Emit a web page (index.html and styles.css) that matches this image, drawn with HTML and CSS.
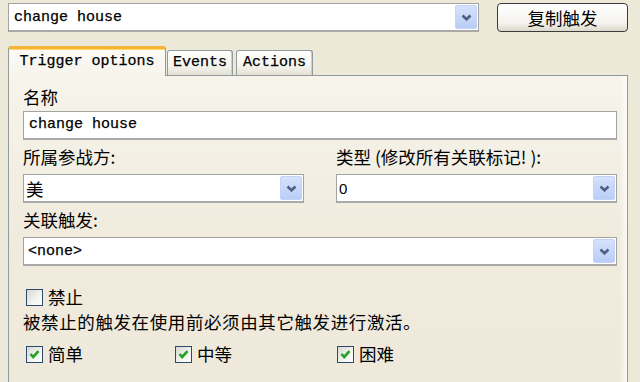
FILE: index.html
```html
<!DOCTYPE html>
<html>
<head>
<meta charset="utf-8">
<link rel="stylesheet" href="styles.css">
</head>
<body>
<div class="top">
  <div class="combo combo-top">
    <span class="val mono">change house</span>
    <span class="drop"><svg width="11" height="7" viewBox="0 0 11 7"><path d="M1.5 1.5 L5.5 5.3 L9.5 1.5" stroke="#4d6185" stroke-width="2.6" fill="none"/></svg></span>
  </div>
  <button class="btn">复制触发</button>
</div>

<div class="tabs">
  <div class="tab active mono">Trigger options</div>
  <div class="tab tab-events mono">Events</div>
  <div class="tab tab-actions mono">Actions</div>
</div>

<div class="panel">
  <div class="label">名称</div>
  <div class="input mono">change house</div>

  <div class="grid2">
    <div class="field">
      <div class="label">所属参战方:</div>
      <div class="combo">
        <span class="val cjk-val">美</span>
        <span class="drop"><svg width="11" height="7" viewBox="0 0 11 7"><path d="M1.5 1.5 L5.5 5.3 L9.5 1.5" stroke="#4d6185" stroke-width="2.6" fill="none"/></svg></span>
      </div>
    </div>
    <div class="field">
      <div class="label">类型 (修改所有关联标记! ):</div>
      <div class="combo">
        <span class="val num-val">0</span>
        <span class="drop"><svg width="11" height="7" viewBox="0 0 11 7"><path d="M1.5 1.5 L5.5 5.3 L9.5 1.5" stroke="#4d6185" stroke-width="2.6" fill="none"/></svg></span>
      </div>
    </div>
  </div>

  <div class="label label-gap">关联触发:</div>
  <div class="combo">
    <span class="val mono none-val">&lt;none&gt;</span>
    <span class="drop"><svg width="11" height="7" viewBox="0 0 11 7"><path d="M1.5 1.5 L5.5 5.3 L9.5 1.5" stroke="#4d6185" stroke-width="2.6" fill="none"/></svg></span>
  </div>

  <div class="check check-disable">
    <span class="box"></span>
    <span>禁止</span>
  </div>
  <div class="desc">被禁止的触发在使用前必须由其它触发进行激活。</div>

  <div class="checks">
    <div class="check">
      <span class="box"><svg width="15" height="15" viewBox="0 0 15 15"><path d="M3.5 7 L6.2 10 L11.5 4.2" stroke="#21a121" stroke-width="2.6" fill="none"/></svg></span>
      <span>简单</span>
    </div>
    <div class="check">
      <span class="box"><svg width="15" height="15" viewBox="0 0 15 15"><path d="M3.5 7 L6.2 10 L11.5 4.2" stroke="#21a121" stroke-width="2.6" fill="none"/></svg></span>
      <span>中等</span>
    </div>
    <div class="check">
      <span class="box"><svg width="15" height="15" viewBox="0 0 15 15"><path d="M3.5 7 L6.2 10 L11.5 4.2" stroke="#21a121" stroke-width="2.6" fill="none"/></svg></span>
      <span>困难</span>
    </div>
  </div>
</div>
</body>
</html>
```

FILE: styles.css
```css
* { box-sizing: border-box; }

html, body {
  margin: 0;
  padding: 0;
  height: 100%;
  overflow: hidden;
}

body {
  background: #ece9d8;
  font-family: "Noto Sans CJK SC", "Noto Sans", sans-serif;
  font-size: 17.5px;
  color: #000;
  padding: 3px 0 0 8px;
}

.mono {
  font-family: "Liberation Mono", "DejaVu Sans Mono", monospace;
  font-size: 15px;
  -webkit-text-stroke: 0.25px #000;
}

/* top row */
.top {
  display: flex;
  align-items: flex-start;
}

.combo {
  display: flex;
  align-items: center;
  height: 29px;
  background: #fff;
  border: 1px solid #a3a3a3;
  border-bottom: 2px solid #a9a9a9;
  padding: 1px 1px 0 0;
}

.combo-top {
  width: 471px;
}

.val {
  flex: 1;
  padding-left: 5px;
  line-height: 20px;
  white-space: nowrap;
}

.cjk-val { padding-left: 2px; }
.num-val {
  padding-left: 2px;
  font-family: "Liberation Sans", Arial, sans-serif;
  font-size: 15px;
}
.none-val { padding-left: 4px; }

.drop {
  width: 22px;
  align-self: stretch;
  display: flex;
  align-items: center;
  justify-content: center;
  background: linear-gradient(#d6e2fb, #b9cdf6);
  border: 1px solid #c3d3f7;
  border-radius: 2px;
  margin-bottom: 1px;
}

.btn {
  margin-left: 18px;
  width: 131px;
  height: 29px;
  border: 1px solid #3c3c3c;
  border-radius: 4px;
  background: linear-gradient(#ffffff, #f4f3ee 70%, #dcd8cc);
  font-family: "Noto Sans CJK SC", sans-serif;
  font-size: 17.5px;
  color: #000;
  padding: 0;
  line-height: 26px;
}

/* tabs */
.tabs {
  display: flex;
  align-items: flex-end;
  height: 29px;
  margin-top: 14px;
  position: relative;
  z-index: 1;
}

.tab {
  height: 25px;
  line-height: 23px;
  text-align: center;
  border: 1px solid #919b9c;
  border-bottom: none;
  border-radius: 3px 3px 0 0;
  background: linear-gradient(#ffffff, #f5f4ef 60%, #e4e1d4);
  box-shadow: inset -1px 0 0 #cfcdc4;
}

.tab.active {
  width: 158px;
  height: 30px;
  line-height: 26px;
  border-top: 3px solid #f5b338;
  border-radius: 3px 3px 0 0;
  background: linear-gradient(#fbfaf6, #f6f4ec);
  box-shadow: inset 0 1px 0 #ffd96a;
  margin-bottom: -1px;
}

.tab-events {
  width: 66px;
  margin-left: 1px;
}

.tab-actions {
  width: 77px;
  margin-left: 3px;
}

/* panel */
.panel {
  width: 620px;
  height: 400px;
  border: 1px solid #919b9c;
  border-bottom: none;
  background: linear-gradient(#f6f4ec, #f0ebdd 40%, #eee8d9);
  padding: 11px 10px 0 14px;
  box-shadow: inset -9px 0 6px -6px rgba(255, 255, 255, 0.9);
}

.label {
  line-height: 20px;
  height: 20px;
  white-space: nowrap;
}

.input {
  margin-top: 4px;
  height: 29px;
  background: #fff;
  border: 1px solid #a3a3a3;
  border-bottom: 2px solid #a9a9a9;
  padding: 3px 0 0 5px;
  line-height: 20px;
}

.grid2 {
  display: grid;
  grid-template-columns: 281px 281px;
  column-gap: 32px;
  margin-top: 7px;
}

.field .combo {
  margin-top: 7px;
}

.label-gap {
  margin-top: 7px;
}

.label-gap + .combo {
  margin-top: 7px;
}

.check {
  display: flex;
  align-items: center;
  gap: 5px;
  height: 20px;
  line-height: 20px;
}

.check-disable {
  margin-top: 21px;
  padding-left: 3px;
}

.box {
  width: 17px;
  height: 17px;
  border: 1px solid #2a4a70;
  background: linear-gradient(135deg, #d8d8d2, #f4f4f0 60%, #ffffff);
  display: flex;
  align-items: center;
  justify-content: center;
}

.desc {
  margin-top: 5px;
  line-height: 20px;
  letter-spacing: 0.6px;
  white-space: nowrap;
}

.checks {
  display: grid;
  grid-template-columns: 149px 162px auto;
  margin-top: 12px;
  padding-left: 3px;
}
```
